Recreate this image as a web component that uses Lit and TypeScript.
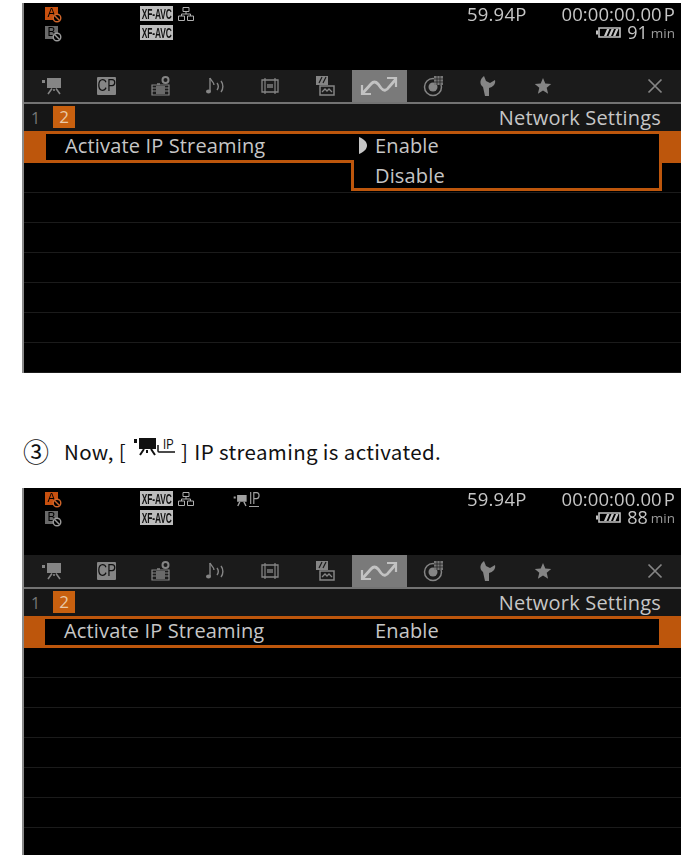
import { LitElement, html, css, svg } from "lit";
import { customElement, property } from "lit/decorators.js";

const G = "#858585";

const camera = svg`<svg class="ic" width="22" height="18" viewBox="0 0 22 18">
  <path d="M1 3h3v3H1z" fill="${G}"/>
  <path d="M6 1h14v10H6z" fill="${G}"/>
  <path d="M11 11.500 7 17M15 11.500 19 17M13 12v2" stroke="${G}" stroke-width="1.600" fill="none"/></svg>`;

const scene = svg`<svg class="ic" width="22" height="22" viewBox="0 0 22 22">
  <circle cx="15.500" cy="5" r="3" fill="none" stroke="${G}" stroke-width="2"/>
  <path d="M7 9h3" stroke="${G}" stroke-width="1.500"/>
  <path d="M2 10h17v10H2z" fill="none" stroke="${G}" stroke-width="1.200"/>
  <path d="M6 11h9v8H6z" fill="#6a6a6a"/>
  <path d="M2 13h4M2 16h4M15 13h4M15 16h4" stroke="${G}"/></svg>`;

const audio = svg`<svg class="ic" width="22" height="20" viewBox="0 0 22 20">
  <path d="M5 2v13" stroke="${G}" stroke-width="1.400"/>
  <path d="M5 2c1 3 4 4 4 7" stroke="${G}" stroke-width="1.400" fill="none"/>
  <ellipse cx="3.500" cy="15.500" rx="2.500" ry="2" fill="${G}"/>
  <path d="M12 7c1.500 2 1.500 5 0 7M16 5c2.500 3 2.500 8 0 11" stroke="${G}" stroke-width="1.400" fill="none"/></svg>`;

const frame = svg`<svg class="ic" width="22" height="20" viewBox="0 0 22 20">
  <path d="M3 4h16v12H3z" fill="none" stroke="${G}" stroke-width="1.300"/>
  <path d="M6 2v16M16 2v16" stroke="${G}" stroke-width="1.200"/>
  <path d="M8 8h6v4H8z" fill="${G}" opacity=".7"/></svg>`;

const pict = svg`<svg class="ic" width="22" height="22" viewBox="0 0 22 22">
  <path d="M2 1h12v9H2z" fill="${G}"/>
  <path d="M5 8l3-6M9 8l3-6" stroke="#1b1b1b" stroke-width="1.200"/>
  <path d="M6 11h14v9H6z" fill="#1b1b1b" stroke="${G}" stroke-width="1.500"/>
  <path d="M8 17l3-3 2 2 2-2 3 3" fill="none" stroke="${G}" stroke-width="1.300"/></svg>`;

const net = svg`<svg class="ic" width="38" height="20" viewBox="0 0 38 20">
  <path d="M2 18 L11 8 Q14.500 4 18 8 L21 12 Q25 17 29 11 L36 3" fill="none" stroke="#c2c2c2" stroke-width="2.800"/>
  <path d="M2 9v9h9M27 2h9v9" fill="none" stroke="#c2c2c2" stroke-width="2.200"/></svg>`;

const media = svg`<svg class="ic" width="22" height="22" viewBox="0 0 22 22">
  <circle cx="10" cy="12" r="8.500" fill="none" stroke="${G}" stroke-width="1.500"/>
  <circle cx="10" cy="12" r="4.500" fill="${G}"/>
  <path d="M11 1h9v9h-9z" fill="#777"/>
  <path d="M14 1v9M17 1v9M11 4h9M11 7h9" stroke="#1b1b1b" stroke-width=".7"/></svg>`;

const wrench = svg`<svg class="ic" width="18" height="22" viewBox="0 0 18 22">
  <path d="M5 1 C1 4 0 9 4 12 L6 21 H10 L10 13 C14 12 17 9 16 5 L11 8 L7 6 Z" fill="${G}"/></svg>`;

const star = svg`<svg class="ic" width="18" height="18" viewBox="0 0 18 18">
  <path d="M9 1l2.300 5.500 5.900.5-4.500 3.800 1.400 5.900L9 13.600l-5.100 3.100 1.400-5.900L.8 7l5.900-.5z" fill="${G}"/></svg>`;

const closeX = svg`<svg class="ic" width="18" height="18" viewBox="0 0 18 18">
  <path d="M2.500 2.500l13 13M15.500 2.500l-13 13" stroke="${G}" stroke-width="1.700"/></svg>`;

const network = svg`<svg class="ic" width="16" height="14" viewBox="0 0 16 14">
  <path d="M5 .5h6v4H5zM.5 9h6v4.500H.5zM9.500 9h6v4.500h-6z" fill="none" stroke="#b0b0b0"/>
  <path d="M8 4.500V7M3.500 9V7h9v2" fill="none" stroke="#b0b0b0"/></svg>`;

const battery = svg`<svg class="ic" width="25" height="11" viewBox="0 0 25 11">
  <path d="M0 3.500h2v4H0z" fill="#c4c4c4"/>
  <path d="M3 1h21v9H3z" fill="none" stroke="#c4c4c4" stroke-width="1.600"/>
  <path d="M8 9l3-7h2.500l-3 7zM12.500 9l3-7H18l-3 7zM17 9l3-7h2.500l-3 7z" fill="#c4c4c4"/></svg>`;

const noEntry = (c: string) => svg`<svg class="no" width="10" height="10" viewBox="0 0 10 10">
  <circle cx="5" cy="5" r="3.800" fill="#000" stroke="${c}" stroke-width="1.400"/>
  <path d="M2.500 2.500l5 5" stroke="${c}" stroke-width="1.400"/></svg>`;

const xf = html`<span class="xf"><span>XF-AVC</span></span>`;
const TABS = [camera, html`<span class="cp"><span>CP</span></span>`, scene, audio, frame, pict, net, media, wrench, star];

@customElement("cam-screen")
class CamScreen extends LitElement {
  @property() remaining = "91";
  @property({ type: Boolean }) open = false;
  @property({ type: Boolean }) streaming = false;

  static styles = css`
    :host { display: block; height: 100%; }
    .screen {
      height: 100%; box-sizing: border-box; overflow: hidden;
      background: #000; border-left: 2px solid #8a8a8a;
      font-family: "Open Sans", "Noto Sans", sans-serif; color: #c6c6c6;
      display: flex; flex-direction: column;
    }
    .soft { filter: blur(0.45px); display: flex; flex-direction: column; height: 100%; }
    .ic { display: block; }
    .status {
      height: 67px; flex: none; box-sizing: border-box; padding-top: 1px;
      display: grid; grid-template-columns: 116px 92px 235px 62px 152px;
      grid-template-rows: 19px 19px; align-items: center;
    }
    .slot { display: flex; align-items: center; position: relative; }
    .media { margin-left: 21px; }
    .letter {
      width: 13px; height: 13px; font: 12px/13px "Liberation Sans", sans-serif;
      text-align: center; color: #000; position: relative;
    }
    .letter.a { background: #c8500f; }
    .letter.b { background: #6a6a6a; }
    .no { position: absolute; left: 7px; top: 6px; }
    .xf {
      width: 33px; height: 15px; background: #bdbdbd; color: #111;
      display: flex; justify-content: center;
      font: 700 15px/15px "Liberation Sans", sans-serif; white-space: nowrap;
    }
    .xf span { flex: none; transform: scaleX(.56); letter-spacing: -.2px; }
    .netic { margin-left: 5px; }
    .ipstream { display: flex; align-items: flex-end; color: #a0a0a0; margin-left: 1px; }
    .ipstream > span { font: 16px/15px "Liberation Sans", sans-serif; border-bottom: 1px solid #a0a0a0; width: 10px; margin-left: 1px; }
    .ipstream span span { display: block; transform: scaleX(.75); transform-origin: left; }
    .fps { font-size: 18.500px; line-height: 19px; grid-row: 1; grid-column: 4; letter-spacing: .2px; white-space: nowrap; }
    .tc { font-size: 18.500px; line-height: 19px; grid-row: 1; grid-column: 5; text-align: right; padding-right: 6px; letter-spacing: .1px; white-space: nowrap; justify-self: end; }
    .tc b { font-weight: 400; margin-left: 2px; }
    .batt { grid-row: 2; grid-column: 5; display: flex; justify-content: flex-end; align-items: center; padding-right: 6px; font-size: 18px; line-height: 19px; }
    .batt .ic { margin-right: 6px; }
    .batt small { font-size: 13.500px; line-height: 15px; color: #9a9a9a; margin-left: 3px; padding-top: 2px; }
    .tabs {
      height: 32px; flex: none; background: #1b1b1b; border-bottom: 2px solid #737373;
      display: flex; align-items: center;
    }
    .tab { width: 54.500px; height: 100%; flex: none; display: flex; align-items: center; justify-content: center; }
    .tab.on { background: #7a7a7a; }
    .tab:first-child { margin-left: 1px; }
    .x { margin-left: auto; margin-right: 17px; }
    .cp {
      width: 19px; height: 18px; background: #858585; border-radius: 1px;
      color: #111; font: 400 17px/18px "Liberation Sans", sans-serif;
      display: flex; justify-content: center; white-space: nowrap;
    }
    .cp span { flex: none; transform: scaleX(.78); }
    .sub {
      height: 27px; flex: none; background: #161616; display: flex; align-items: center;
      padding-right: 20px; font-size: 20px;
    }
    .page { width: 22px; color: #777; padding-left: 7px; box-sizing: border-box; font-size: 16px; }
    .page.cur { width: 22px; height: 22px; margin: 2px 0 0 7px; padding: 0; background: #c8600f; color: #e9c9a8; text-align: center; line-height: 22px; align-self: flex-start; font-size: 17px; }
    .title { margin-left: auto; letter-spacing: .2px; }
    .row {
      height: 32px; flex: none; box-sizing: border-box; background: #bd560c;
      padding: 3px 22px 3px 22px; position: relative;
    }
    .row.closed { padding-left: 21px; }
    .inner {
      height: 100%; box-sizing: border-box; padding-bottom: 3px; background: #000;
      display: flex; align-items: center; font-size: 20px; line-height: 23px; letter-spacing: .15px;
    }
    .label { margin-left: 19px; width: 293px; flex: none; white-space: nowrap; }
    .closed .label { width: 294px; }
    .mark { width: 10px; height: 17px; flex: none; margin-right: 7px; }
    .pop {
      position: absolute; left: 327px; top: 29px; width: 311px; height: 31px; box-sizing: border-box;
      background: #000; border: 3px solid #bd560c; border-top: 0;
      display: flex; align-items: center; padding: 2px 0 0 21px;
      font-size: 20px; line-height: 23px; letter-spacing: .15px;
    }
    .line { height: 30px; flex: none; box-sizing: border-box; border-bottom: 1px solid #1b1b1b; }
  `;

  render() {
    return html`<div class="screen"><div class="soft">
      <div class="status">
        <div class="slot media"><span class="letter a">A${noEntry("#d0652a")}</span></div>
        <div class="slot">${xf}<span class="netic">${network}</span></div>
        <div class="slot">${this.streaming ? html`<span class="ipstream">${svg`<svg class="ic" width="15" height="13" viewBox="0 0 22 18"><path d="M1 3h3v3H1zM6 1h14v10H6z" fill="#a0a0a0"/><path d="M10 11 7 17M16 11l3 6" stroke="#a0a0a0" stroke-width="2"/></svg>`}<span><span>IP</span></span></span>` : ""}</div>
        <div class="fps">59.94P</div>
        <div class="tc">00:00:00.00<b>P</b></div>
        <div class="slot media"><span class="letter b">B${noEntry("#9a9a9a")}</span></div>
        <div class="slot">${xf}</div>
        <div></div><div></div>
        <div class="batt">${battery}${this.remaining}<small>min</small></div>
      </div>
      <div class="tabs">
        ${TABS.map((t, i) => html`<div class="tab ${i === 6 ? "on" : ""}">${t}</div>`)}
        <div class="x">${closeX}</div>
      </div>
      <div class="sub">
        <span class="page">1</span><span class="page cur">2</span>
        <span class="title">Network Settings</span>
      </div>
      <div class="row ${this.open ? "" : "closed"}">
        <div class="inner">
          <span class="label">Activate IP Streaming</span>
          ${this.open ? html`<svg class="mark" viewBox="0 0 10 17"><path d="M1 0c5 2 8 5 8 8.500s-3 6.500-8 8.500z" fill="#c6c6c6"/></svg>` : html`<span class="mark"></span>`}
          <span>Enable</span>
        </div>
        ${this.open ? html`<div class="pop">Disable</div>` : ""}
      </div>
      ${[0, 1, 2, 3, 4, 5, 6].map(() => html`<div class="line"></div>`)}
    </div></div>`;
  }
}

@customElement("app-root")
class AppRoot extends LitElement {
  static styles = css`
    :host { display: block; width: 692px; height: 855px; background: #fff; overflow: hidden; }
    .page { padding: 3px 11px 0 22px; display: flex; flex-direction: column; }
    .s1 { height: 370px; flex: none; }
    .s2 { height: 367px; flex: none; }
    .step {
      height: 115px; flex: none; box-sizing: border-box; padding: 41px 0 0 1px;
      display: flex; align-items: center; color: #111;
      font: 20.500px/30px "Noto Sans CJK JP", sans-serif; white-space: nowrap; letter-spacing: .35px;
    }
    .num { width: 41px; flex: none; font-size: 26px; letter-spacing: 0; }
    .inl { margin: -4px 0 0 8px; overflow: visible; }
    .br { margin: 0 6px 0 5px; }
  `;
  render() {
    return html`<div class="page">
      <div class="s1"><cam-screen remaining="91" open></cam-screen></div>
      <div class="step">
        <span class="num">③</span>
        <span>Now, [</span>
        <svg class="inl" width="42" height="26" viewBox="0 0 42 26">
          <path d="M0 3h3v4H0zM5 2h17v11H5z" fill="#111"/>
          <path d="M10 13l-4 6M17 13l4 6M13 14v3" stroke="#111" stroke-width="2" fill="none"/>
          <text x="29" y="13" font-family="Liberation Sans" font-size="15" fill="#111" textLength="11" lengthAdjust="spacingAndGlyphs">IP</text>
          <path d="M24 9v6q0 1 1 1h16" stroke="#111" stroke-width="1.500" fill="none"/>
        </svg>
        <span class="br">]</span>
        <span>IP streaming is activated.</span>
      </div>
      <div class="s2"><cam-screen remaining="88" streaming></cam-screen></div>
    </div>`;
  }
}
